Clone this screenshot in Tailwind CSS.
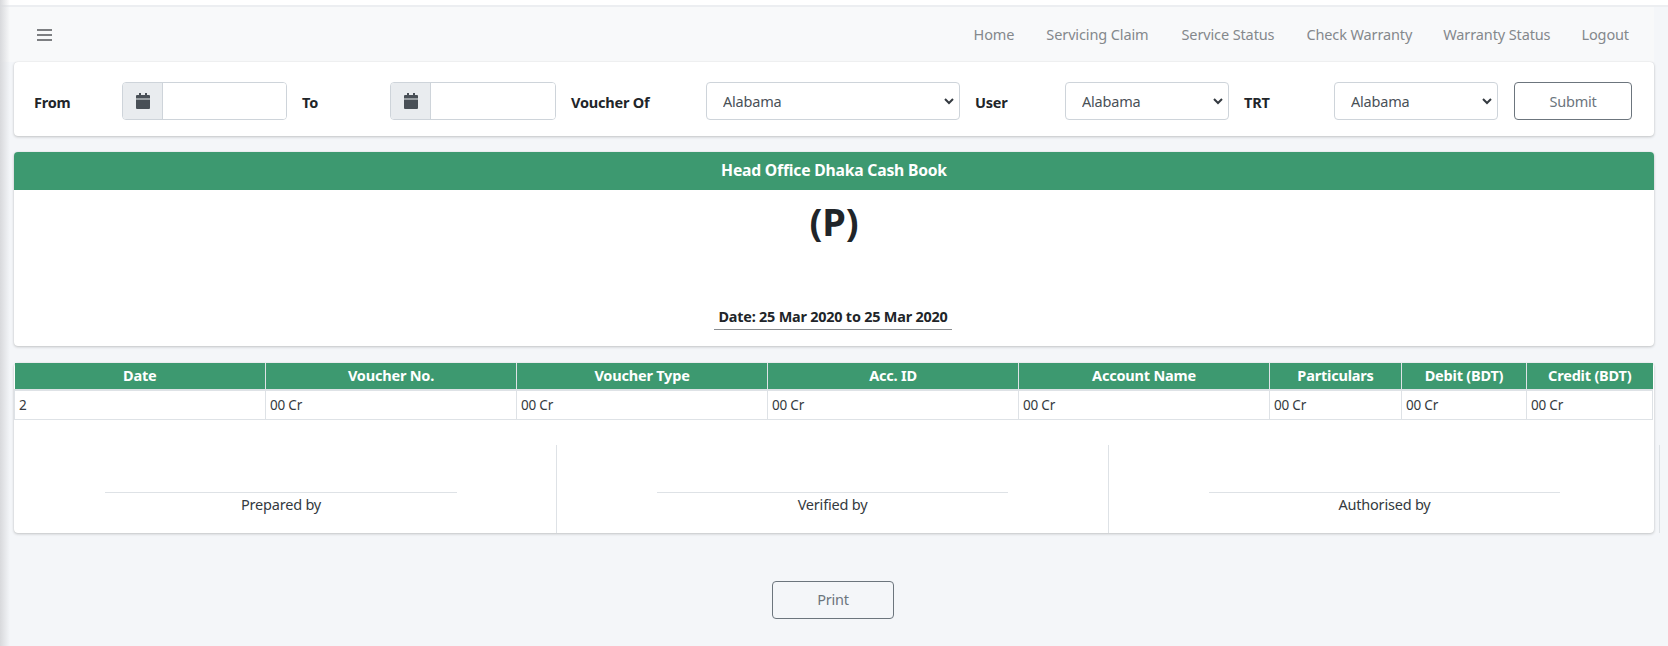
<!DOCTYPE html>
<html lang="en">
<head>
<meta charset="utf-8">
<title>Cash Book</title>
<script src="https://cdn.jsdelivr.net/npm/@tailwindcss/browser@4"></script>
</head>
<body class="bg-[#f4f6f9] font-['Noto_Sans',sans-serif] text-[14.5px] tracking-[-0.2px] text-[#212529] overflow-hidden">
<div class="relative w-[1668px] h-[646px] overflow-hidden">
  <div class="absolute left-0 top-0 bottom-0 w-[10px] bg-gradient-to-r from-[#d8d9dc] to-transparent"></div>
  <div class="h-[7px] bg-white border-b-2 border-[#eceef1]"></div>
  <div class="ml-[14px] w-[1640px]">
    <nav class="-ml-[14px] w-[1654px] h-[55px] bg-[#f8f9fa] flex items-center justify-between pl-[37px] pr-[25px]">
      <svg class="w-[15px] h-[14px] text-[#7d7f82]" viewBox="0 0 15 14" fill="currentColor"><rect y="1" width="15" height="2"/><rect y="6" width="15" height="2"/><rect y="11" width="15" height="2"/></svg>
      <div class="flex gap-[32px] text-[#84888c] tracking-[-0.12px]">
        <a>Home</a><a>Servicing Claim</a><a class="ml-[1px]">Service Status</a><a>Check Warranty</a><a class="-ml-[1px]">Warranty Status</a><a class="-ml-[1px]">Logout</a>
      </div>
    </nav>
    <section class="bg-white rounded-[4px] shadow-[0_0_1px_rgba(0,0,0,.125),0_1px_3px_rgba(0,0,0,.2)] h-[74px] flex items-center pl-[20px] pt-[4px] font-bold">
      <label class="w-[88px] pt-[3px]">From</label>
      <div class="w-[165px] h-[38px] flex border border-[#ced4da] rounded-[4px] overflow-hidden">
        <span class="w-[40px] bg-[#e9ecef] border-r border-[#ced4da] flex items-center justify-center">
          <svg class="w-[14px] h-[16px] text-[#495057]" viewBox="0 0 14 16" fill="currentColor"><path d="M3 0h2v2h4V0h2v2h2a1 1 0 0 1 1 1v2.5H0V3a1 1 0 0 1 1-1h2zM0 6.5h14V15a1 1 0 0 1-1 1H1a1 1 0 0 1-1-1z"/></svg>
        </span>
        <input class="flex-1 min-w-0 bg-white" aria-label="From">
      </div>
      <label class="ml-[15px] w-[88px] pt-[3px]">To</label>
      <div class="w-[166px] h-[38px] flex border border-[#ced4da] rounded-[4px] overflow-hidden">
        <span class="w-[40px] bg-[#e9ecef] border-r border-[#ced4da] flex items-center justify-center">
          <svg class="w-[14px] h-[16px] text-[#495057]" viewBox="0 0 14 16" fill="currentColor"><path d="M3 0h2v2h4V0h2v2h2a1 1 0 0 1 1 1v2.5H0V3a1 1 0 0 1 1-1h2zM0 6.5h14V15a1 1 0 0 1-1 1H1a1 1 0 0 1-1-1z"/></svg>
        </span>
        <input class="flex-1 min-w-0 bg-white" aria-label="To">
      </div>
      <label class="ml-[15px] w-[135px] pt-[3px]">Voucher Of</label>
      <div class="relative w-[254px] h-[38px]">
        <select class="appearance-none w-full h-full border border-[#ced4da] rounded-[4px] bg-white pl-[16px] pt-[2px] font-normal text-[#495057]"><option>Alabama</option></select>
        <svg class="absolute right-[5px] top-[14px] w-[12px] h-[10px] text-[#343a40]" viewBox="0 0 12 10" fill="none" stroke="currentColor" stroke-width="2"><path d="M2 3l4 4 4-4"/></svg>
      </div>
      <label class="ml-[15px] w-[90px] pt-[3px]">User</label>
      <div class="relative w-[164px] h-[38px]">
        <select class="appearance-none w-full h-full border border-[#ced4da] rounded-[4px] bg-white pl-[16px] pt-[2px] font-normal text-[#495057]"><option>Alabama</option></select>
        <svg class="absolute right-[5px] top-[14px] w-[12px] h-[10px] text-[#343a40]" viewBox="0 0 12 10" fill="none" stroke="currentColor" stroke-width="2"><path d="M2 3l4 4 4-4"/></svg>
      </div>
      <label class="ml-[15px] w-[90px] pt-[3px]">TRT</label>
      <div class="relative w-[164px] h-[38px]">
        <select class="appearance-none w-full h-full border border-[#ced4da] rounded-[4px] bg-white pl-[16px] pt-[2px] font-normal text-[#495057]"><option>Alabama</option></select>
        <svg class="absolute right-[5px] top-[14px] w-[12px] h-[10px] text-[#343a40]" viewBox="0 0 12 10" fill="none" stroke="currentColor" stroke-width="2"><path d="M2 3l4 4 4-4"/></svg>
      </div>
      <button class="ml-[16px] w-[118px] h-[38px] border border-[#6c757d] rounded-[4px] pt-[2px] font-normal text-[#6c757d]">Submit</button>
    </section>
    <section class="mt-[16px] bg-white rounded-[4px] overflow-hidden shadow-[0_0_1px_rgba(0,0,0,.125),0_1px_3px_rgba(0,0,0,.2)] h-[194px] flex flex-col items-center">
      <div class="w-full h-[38px] shrink-0 bg-[#3d9970] text-white text-[15.7px] font-bold flex items-center justify-center">Head Office Dhaka Cash Book</div>
      <div class="text-[38px] leading-[44px] font-bold mt-[9px]">(P)</div>
      <div class="mt-[62px] mr-[2px] w-[238px] border-b border-[#8a8d90] pb-[1px] text-center font-bold text-[14.4px] leading-[23px]">Date: 25 Mar 2020 to 25 Mar 2020</div>
    </section>
    <section class="mt-[17px] bg-white rounded-[4px] shadow-[0_0_1px_rgba(0,0,0,.125),0_1px_3px_rgba(0,0,0,.2)] h-[170px]">
      <table class="table-fixed border-collapse w-[1638px]">
        <colgroup><col class="w-[251px]"><col class="w-[251px]"><col class="w-[251px]"><col class="w-[251px]"><col class="w-[251px]"><col class="w-[132px]"><col class="w-[125px]"><col class="w-[126px]"></colgroup>
        <thead>
          <tr class="h-[27px] bg-[#3d9970] text-white font-bold">
            <th class="border-r border-b-2 border-[#dee2e6]">Date</th><th class="border-r border-b-2 border-[#dee2e6]">Voucher No.</th><th class="border-r border-b-2 border-[#dee2e6]">Voucher Type</th><th class="border-r border-b-2 border-[#dee2e6]">Acc. ID</th><th class="border-r border-b-2 border-[#dee2e6]">Account Name</th><th class="border-r border-b-2 border-[#dee2e6]">Particulars</th><th class="border-r border-b-2 border-[#dee2e6]">Debit (BDT)</th><th class="border-b-2 border-[#dee2e6]">Credit (BDT)</th>
          </tr>
        </thead>
        <tbody>
          <tr class="h-[29px] text-[13.5px] text-[#343a40]">
            <td class="border border-[#dee2e6] pl-[4px]">2</td><td class="border border-[#dee2e6] pl-[4px]">00 Cr</td><td class="border border-[#dee2e6] pl-[4px]">00 Cr</td><td class="border border-[#dee2e6] pl-[4px]">00 Cr</td><td class="border border-[#dee2e6] pl-[4px]">00 Cr</td><td class="border border-[#dee2e6] pl-[4px]">00 Cr</td><td class="border border-[#dee2e6] pl-[4px]">00 Cr</td><td class="border border-[#dee2e6] pl-[4px]">00 Cr</td>
          </tr>
        </tbody>
      </table>
      <div class="mt-[25px] flex w-[1646px] h-[88px] text-[#343a40]">
        <div class="w-[543px] border-r border-[#dee2e6] pt-[47px] text-center"><div class="ml-[91px] w-[352px] border-t border-[#dee2e6] pt-[1px]">Prepared by</div></div>
        <div class="w-[552px] border-r border-[#dee2e6] pt-[47px] text-center"><div class="ml-[100px] w-[351px] border-t border-[#dee2e6] pt-[1px]">Verified by</div></div>
        <div class="w-[551px] border-r border-[#dee2e6] pt-[47px] text-center"><div class="ml-[100px] w-[351px] border-t border-[#dee2e6] pt-[1px]">Authorised by</div></div>
      </div>
    </section>
    <div class="mt-[48px] flex justify-center pr-[2px]">
      <button class="w-[122px] h-[38px] border border-[#6c757d] rounded-[4px] text-[#6c757d]">Print</button>
    </div>
  </div>
</div>
</body>
</html>
